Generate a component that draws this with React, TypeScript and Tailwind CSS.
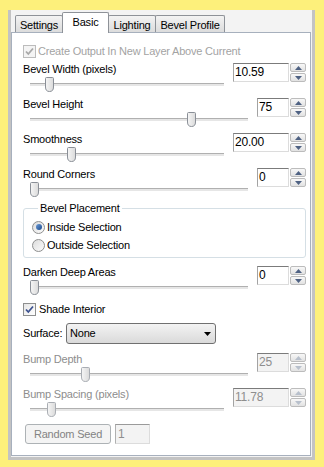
import React from 'react'

function Thumb({ left, disabled }: { left: number; disabled?: boolean }) {
  return (
    <svg className="absolute top-0" style={{ left }} width="9" height="15" viewBox="0 0 9 15">
      <defs>
        <linearGradient id="thumbFill" x1="0" y1="0" x2="1" y2="0">
          <stop offset="0" stopColor="#f6f6f6" />
          <stop offset="1" stopColor="#dadada" />
        </linearGradient>
      </defs>
      <path
        d="M1.5 0.5 H7.5 Q8.5 0.5 8.5 1.5 V10 Q8.5 14.5 4.5 14.5 Q0.5 14.5 0.5 10 V1.5 Q0.5 0.5 1.5 0.5 Z"
        fill="url(#thumbFill)"
        stroke={disabled ? '#a9adb3' : '#8a8f97'}
      />
    </svg>
  )
}

function Slider({ thumb, disabled }: { thumb: number; disabled?: boolean }) {
  return (
    <div className="relative h-[20px]">
      <div className="ml-[7px] mr-[9px] pt-[6px]">
        <div className="h-[3px] border-t border-[#b0b0b0] bg-[#e6e6e6]" />
      </div>
      <Thumb left={thumb} disabled={disabled} />
    </div>
  )
}

function SpinButton({ up, disabled }: { up?: boolean; disabled?: boolean }) {
  return (
    <div className="flex h-[9px] w-[16px] items-center justify-center rounded-[2px] border border-[#bcbcbc] bg-linear-to-b from-[#f8f8f8] to-[#e2e2e2]">
      <svg width="7" height="4" viewBox="0 0 7 4">
        <path d={up ? 'M0 4 L3.5 0 L7 4 Z' : 'M0 0 L7 0 L3.5 4 Z'} fill={disabled ? '#b8c0cc' : '#4f6283'} />
      </svg>
    </div>
  )
}

function Spin({ value, wide, disabled }: { value: string; wide?: boolean; disabled?: boolean }) {
  return (
    <div className="flex gap-[1px]">
      <div
        className={`h-[19px] border border-t-[#7b7b7b] border-l-[#a3a3a3] border-r-[#dcdcdc] border-b-[#dcdcdc] pl-[1px] text-[12px] leading-[17px] ${
          wide ? 'w-[56px]' : 'w-[32px]'
        } ${disabled ? 'bg-[#f3f3f3] text-[#8e8e8e]' : 'bg-white text-black'}`}
      >
        {value}
      </div>
      <div className="flex flex-col gap-[1px]">
        <SpinButton up disabled={disabled} />
        <SpinButton disabled={disabled} />
      </div>
    </div>
  )
}

function SliderBlock({
  label,
  value,
  thumb,
  wide,
  disabled,
}: {
  label: string
  value: string
  thumb: number
  wide?: boolean
  disabled?: boolean
}) {
  return (
    <div className="flex h-[35px] items-start">
      <div className="flex-1">
        <div className={`h-[15px] leading-[15px] ${disabled ? 'text-[#8d8d8d]' : 'text-black'}`}>{label}</div>
        <Slider thumb={thumb} disabled={disabled} />
      </div>
      <div className="mt-[1px]">
        <Spin value={value} wide={wide} disabled={disabled} />
      </div>
    </div>
  )
}

function CheckBox({ disabled }: { disabled?: boolean }) {
  return (
    <div
      className={`flex h-[13px] w-[13px] items-center justify-center border ${
        disabled ? 'border-[#bcbcbc] bg-[#f4f4f4]' : 'border-[#8e8f8f] bg-linear-to-br from-[#e6e6e6] to-white'
      }`}
    >
      <svg width="11" height="11" viewBox="0 0 11 11">
        <path
          d="M2 5.5 L4.3 8 L9 2.5"
          fill="none"
          stroke={disabled ? '#a8a8a8' : '#3d5290'}
          strokeWidth="1.8"
        />
      </svg>
    </div>
  )
}

function Radio({ checked }: { checked?: boolean }) {
  return (
    <div className="flex h-[13px] w-[13px] items-center justify-center rounded-full border border-[#8e8f8f] bg-linear-to-br from-[#dcdcdc] to-[#fbfbfb]">
      {checked && <div className="h-[6px] w-[6px] rounded-full bg-linear-to-br from-[#6b9ad6] to-[#1b4a8c]" />}
    </div>
  )
}

function Tab({ label, selected, width }: { label: string; selected?: boolean; width: string }) {
  return (
    <div
      className={`-ml-[1px] rounded-t-[2px] border-x border-t border-[#8e9298] text-center leading-[15px] first:ml-0 ${width} ${
        selected
          ? 'relative z-10 -mb-[1px] h-[21px] bg-white pt-[2px]'
          : 'h-[17px] bg-linear-to-b from-[#f3f3f3] to-[#dcdcdc] pt-[2px]'
      }`}
    >
      {label}
    </div>
  )
}

export default function App() {
  return (
    <div className="h-[467px] w-[324px] bg-[#fdf07b] pl-[8px] pt-[10px] font-['Liberation_Sans',Arial,sans-serif] text-[11px] tracking-[-0.2px] text-black">
      <div className="h-[450px] w-[307px] border-x-[3px] border-b-[3px] border-[#c3c3c3] bg-[#f3f3f3]">
        <div className="flex h-[22px] items-end pl-[4px]">
          <Tab label="Settings" width="w-[48px]" />
          <Tab label="Basic" width="w-[47px]" selected />
          <Tab label="Lighting" width="w-[48px]" />
          <Tab label="Bevel Profile" width="w-[70px]" />
        </div>
        <div className="h-[424px] w-[300px] border border-[#a7b0bd] bg-white pl-[11px] pr-[4px]">
          <div className="mt-[11px] flex h-[15px] items-center gap-[2px] text-[#a3a3a3]">
            <CheckBox disabled />
            <span className="leading-[15px]">Create Output In New Layer Above Current</span>
          </div>

          <div className="mt-[3px]">
            <SliderBlock label="Bevel Width (pixels)" value="10.59" thumb={22} wide />
            <SliderBlock label="Bevel Height" value="75" thumb={164} />
            <SliderBlock label="Smoothness" value="20.00" thumb={44} wide />
            <SliderBlock label="Round Corners" value="0" thumb={7} />
          </div>

          <fieldset className="-mt-[1px] rounded-[3px] border border-[#d5dfe5] pb-[3px] pl-[8px]">
            <legend className="ml-[6px] px-[2px] leading-[14px]">Bevel Placement</legend>
            <div className="mt-[3px] flex h-[18px] items-center gap-[2px]">
              <Radio checked />
              <span>Inside Selection</span>
            </div>
            <div className="flex h-[18px] items-center gap-[2px]">
              <Radio />
              <span>Outside Selection</span>
            </div>
          </fieldset>

          <div className="mt-[7px]">
            <SliderBlock label="Darken Deep Areas" value="0" thumb={7} />
          </div>

          <div className="mt-[2px] flex h-[15px] items-center gap-[3px]">
            <CheckBox />
            <span className="leading-[15px]">Shade Interior</span>
          </div>

          <div className="mt-[6px] flex h-[21px] items-center">
            <span className="w-[43px]">Surface:</span>
            <div className="flex h-[21px] w-[150px] items-center justify-between rounded-[3px] border border-[#707070] bg-linear-to-b from-[#f3f3f3] to-[#dadada] pl-[3px] pr-[4px]">
              <span>None</span>
              <svg width="7" height="4" viewBox="0 0 7 4">
                <path d="M0 0 L7 0 L3.5 4 Z" fill="#000" />
              </svg>
            </div>
          </div>

          <div className="mt-[8px]">
            <SliderBlock label="Bump Depth" value="25" thumb={58} disabled />
            <SliderBlock label="Bump Spacing (pixels)" value="11.78" thumb={24} wide disabled />
          </div>

          <div className="mt-[2px] flex h-[20px] items-center gap-[4px] pl-[2px]">
            <div className="flex h-[20px] w-[86px] items-center justify-center rounded-[3px] border border-[#adb2b5] bg-[#f4f4f4] text-[#838383]">
              Random Seed
            </div>
            <div className="h-[20px] w-[35px] border border-t-[#9a9a9a] border-l-[#b0b0b0] border-r-[#dcdcdc] border-b-[#dcdcdc] bg-[#f3f3f3] pl-[2px] text-[12px] leading-[18px] text-[#8e8e8e]">
              1
            </div>
          </div>
        </div>
      </div>
    </div>
  )
}
